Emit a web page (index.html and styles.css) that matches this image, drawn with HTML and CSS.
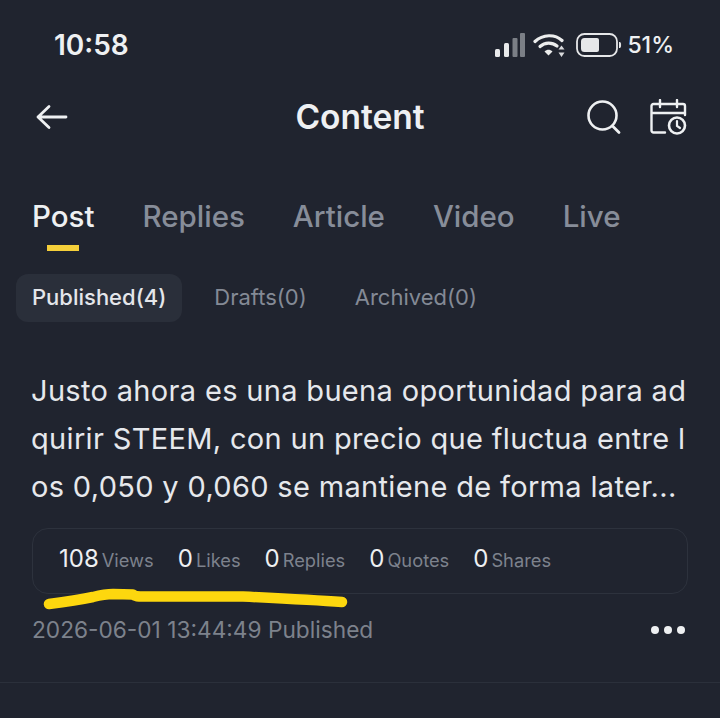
FILE: index.html
```html
<!DOCTYPE html>
<html lang="en">
<head>
<meta charset="utf-8">
<title>Content</title>
<link rel="stylesheet" href="styles.css">
</head>
<body>
<div class="page">
  <div class="status">
    <span class="time">10:58</span>
    <div class="status-right">
      <svg class="i-signal" width="31" height="26" viewBox="0 0 31 26"><rect x="1" y="17" width="5" height="8" rx="1.5" fill="#e8e9eb"/><rect x="10" y="11" width="5" height="14" rx="1.5" fill="#e8e9eb"/><rect x="18.500" y="6" width="5" height="19" rx="1" fill="#7b7f86"/><rect x="26" y="1" width="5" height="24" rx="1" fill="#7b7f86"/></svg>
      <svg class="i-wifi" width="34" height="26" viewBox="0 0 34 26" fill="none"><path d="M2 9.500C10 2 22 2 29 8.500" stroke="#eceded" stroke-width="3.200" stroke-linecap="round"/><path d="M7 14.500C12 10 19 10 24 14" stroke="#eceded" stroke-width="3.200" stroke-linecap="round"/><path d="M11.500 19.500C14 17.300 17 17.300 19.500 19.500L15.500 23.500Z" fill="#eceded"/><path d="M28.500 13.500l3 4h-6zM28.500 25l3-4.500h-6z" fill="#d9dadc"/></svg>
      <svg class="i-batt" width="46" height="26" viewBox="0 0 46 26" fill="none"><rect x="1" y="2" width="40" height="22" rx="7.500" stroke="#e6e7e9" stroke-width="1.800"/><path d="M5 9.500a3.500 3.500 0 0 1 3.500-3.500H21a2 2 0 0 1 2 2v10a2 2 0 0 1-2 2H8.500A3.500 3.500 0 0 1 5 16.500Z" fill="#e6e7e9"/><path d="M43.500 10c1.500.5 1.500 5.500 0 6Z" fill="#e6e7e9" stroke="#e6e7e9"/></svg>
      <span class="pct">51%</span>
    </div>
  </div>
  <div class="nav">
    <svg class="i-back" width="32" height="28" viewBox="0 0 32 28" fill="none"><path d="M2 14H30M13 3.500L2 14l11 10.500" stroke="#eef0f2" stroke-width="2.800" stroke-linecap="round" stroke-linejoin="round"/></svg>
    <h1 class="title">Content</h1>
    <div class="nav-actions">
      <svg width="36" height="36" viewBox="0 0 36 36" fill="none"><circle cx="16.500" cy="16.500" r="14" stroke="#eef0f2" stroke-width="2.600"/><path d="M27 27.500L33 33.500" stroke="#eef0f2" stroke-width="2.800" stroke-linecap="round"/></svg>
      <svg width="38" height="36" viewBox="0 0 38 36" fill="none"><path d="M15 33.500H3.500a2 2 0 0 1-2-2V7a2 2 0 0 1 2-2H33a2 2 0 0 1 2 2v9M1.500 14H35M10 1v7M27 1v7" stroke="#eef0f2" stroke-width="2.400" stroke-linecap="round"/><circle cx="27" cy="26.500" r="8" stroke="#eef0f2" stroke-width="2.600"/><path d="M27 22v5l3 2" stroke="#eef0f2" stroke-width="2.200" stroke-linecap="round"/></svg>
    </div>
  </div>
  <div class="tabs">
    <div class="tab active">Post</div>
    <div class="tab">Replies</div>
    <div class="tab">Article</div>
    <div class="tab">Video</div>
    <div class="tab">Live</div>
  </div>
  <div class="subtabs">
    <div class="sub active">Published(4)</div>
    <div class="sub">Drafts(0)</div>
    <div class="sub">Archived(0)</div>
  </div>
  <p class="body">Justo ahora es una buena oportunidad para ad<br>quirir STEEM, con un precio que fluctua entre l<br>os 0,050 y 0,060 se mantiene de forma later...</p>
  <div class="stats-wrap">
    <div class="stats">
      <span class="stat"><b>108</b><i>Views</i></span>
      <span class="stat"><b>0</b><i>Likes</i></span>
      <span class="stat"><b>0</b><i>Replies</i></span>
      <span class="stat"><b>0</b><i>Quotes</i></span>
      <span class="stat"><b>0</b><i>Shares</i></span>
    </div>
    <svg class="scribble" width="310" height="32" viewBox="0 0 310 32" fill="none"><path d="M6 23C22 21 36 19 50 16C58 14 62 13 70 13L90 13.500C92 15.500 95 15.500 100 15.500L200 15.500C230 17 270 19 299 21" stroke="#fdd70e" stroke-width="10.500" stroke-linecap="round" stroke-linejoin="round"/></svg>
  </div>
  <div class="meta">
    <span class="date">2026-06-01 13:44:49 Published</span>
    <span class="dots"><span></span><span></span><span></span></span>
  </div>
  <div class="rule"></div>
</div>
</body>
</html>
```
FILE: styles.css
```css
* { box-sizing: border-box; }
html, body { margin: 0; padding: 0; background: #20242f; }
.page {
  width: 720px;
  height: 718px;
  overflow: hidden;
  background: #20242f;
  font-family: "Inter", "Liberation Sans", sans-serif;
  color: #eef0f2;
}
.status {
  height: 90px;
  padding: 28px 46px 0 54px;
  display: flex;
  justify-content: space-between;
  align-items: flex-start;
}
.time { font-size: 28px; line-height: 34px; font-weight: 600; }
.status-right { display: flex; align-items: center; height: 34px; gap: 8px; }
.i-wifi { margin-right: 1px; }
.pct { font-size: 23px; font-weight: 500; margin-left: -3px; }
.nav {
  height: 54px;
  padding: 0 32px 0 36px;
  display: grid;
  grid-template-columns: 1fr auto 1fr;
  align-items: center;
}
.title {
  margin: 0;
  padding: 0 4px 1px 0;
  font-size: 33.500px;
  font-weight: 600;
}
.nav-actions { display: flex; gap: 28px; align-items: center; justify-content: flex-end; }
.tabs {
  margin-top: 54px;
  padding-left: 32px;
  display: flex;
  gap: 48px;
}
.tab {
  font-size: 29.500px;
  line-height: 36px;
  color: #878d99;
  height: 74px;
  font-weight: 500;
}
.tab.active { color: #eef0f2; }
.tab.active::after {
  content: "";
  display: block;
  width: 32px;
  height: 6px;
  margin: 11px auto 0;
  background: #f5cf3a;
}
.subtabs {
  padding-left: 16px;
  margin-top: 2px;
  display: flex;
  gap: 16px;
}
.sub {
  height: 48px;
  line-height: 47px;
  padding: 0 16px;
  font-size: 22px;
  color: #848a96;
  border-radius: 12px;
  font-weight: 400;
}
.sub.active { background: #2a2f3a; color: #e4e6ea; font-weight: 500; }
.body {
  margin: 45px 0 0;
  padding-left: 31px;
  font-size: 29px;
  letter-spacing: 0.330px;
  line-height: 48px;
  color: #e6e8ec;
  white-space: nowrap;
  height: 143px;
}
.stats-wrap { position: relative; margin: 18px 32px 0; }
.stats {
  height: 66px;
  border: 1px solid #2d323d;
  border-radius: 16px;
  padding: 0 0 5px 26px;
  display: flex;
  align-items: center;
  gap: 24px;
}
.stat { display: inline-flex; align-items: baseline; gap: 3px; }
.stat b { font-size: 24px; font-weight: 400; color: #eef0f2; }
.stat i { font-style: normal; font-size: 18.300px; color: #7d828d; }
.scribble { position: absolute; left: 11px; top: 53px; }
.meta {
  margin-top: 20px;
  padding: 0 35px 1px 32px;
  display: flex;
  justify-content: space-between;
  align-items: center;
  height: 32px;
}
.date { font-size: 22.700px; color: #7d828c; }
.dots { display: flex; gap: 5px; }
.dots span { width: 8px; height: 8px; border-radius: 50%; background: #eef0f2; }
.rule { margin-top: 36px; height: 1px; background: #2b303b; }
```
